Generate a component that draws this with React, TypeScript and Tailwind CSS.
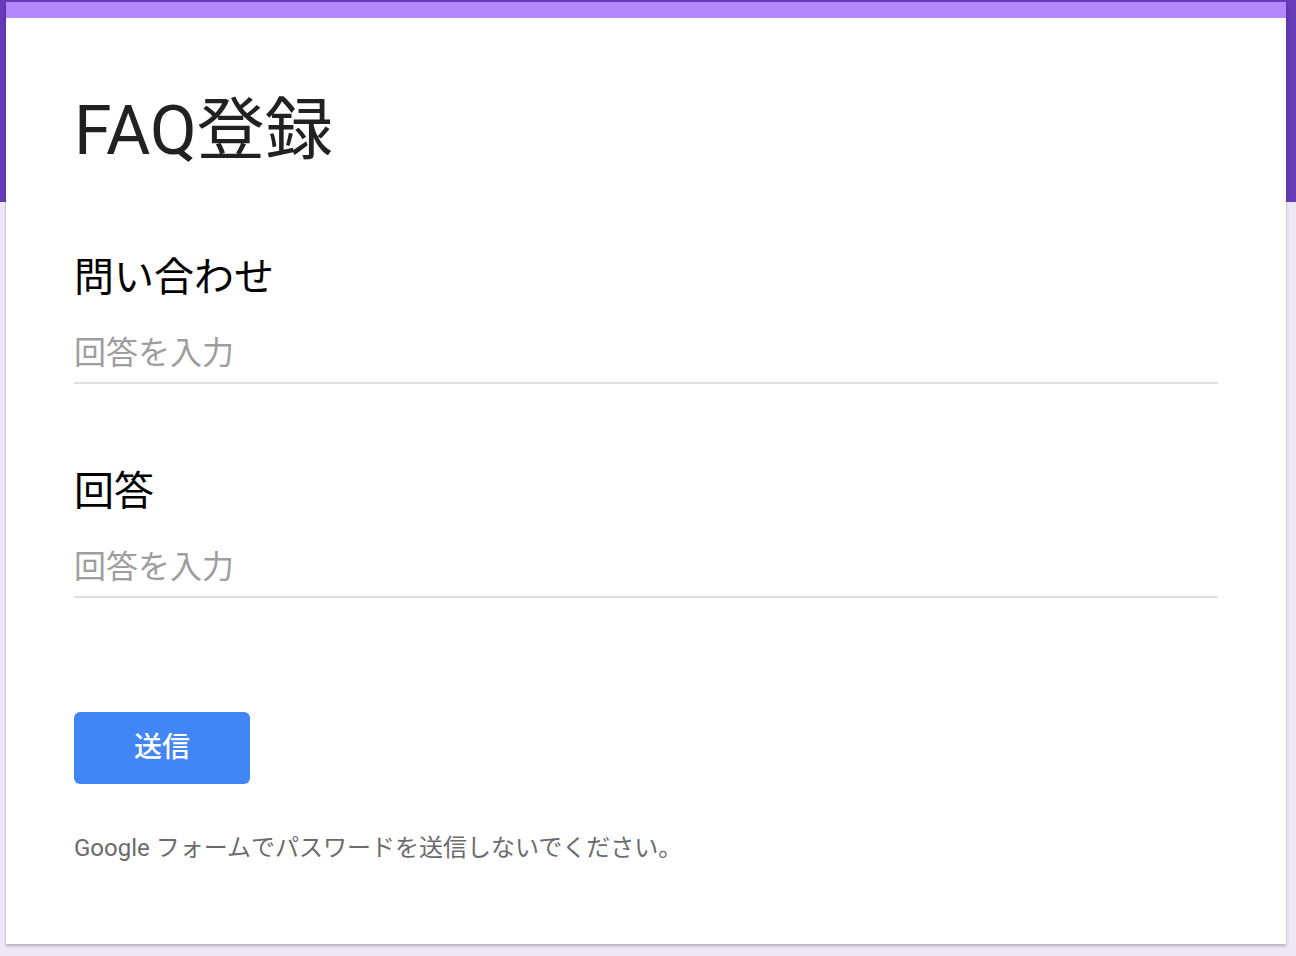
import { FC } from "react";

const font = { fontFamily: '"Roboto", "Noto Sans CJK JP", sans-serif' };

type QuestionProps = {
  label: string;
  className?: string;
};

const Question: FC<QuestionProps> = ({ label, className }) => {
  return (
    <div className={className}>
      <h2 className="text-[40px] leading-[48px] text-black">{label}</h2>
      <div className="mt-[31px] border-b-2 border-[#e0e0e0] pb-[9px]">
        <input
          type="text"
          placeholder="回答を入力"
          className="w-full bg-transparent text-[32px] leading-[40px] text-[#212121] outline-none placeholder:text-[#9e9e9e]"
        />
      </div>
    </div>
  );
};

const App: FC = () => {
  return (
    <main
      style={font}
      className="min-h-screen w-full bg-[linear-gradient(#673ab7_0_202px,#ede7f6_202px)] pt-[2px]"
    >
      <form
        noValidate
        onSubmit={(e) => e.preventDefault()}
        className="ml-[6px] w-[1280px] border-t-[16px] border-[#b388ff] bg-white shadow-[0_2px_3px_rgba(0,0,0,0.25)]"
      >
        <div className="flex flex-col px-[68px] pb-[80px] pt-[73px]">
          <h1 className="text-[68px] leading-[80px] text-[#212121]">FAQ登録</h1>

          <Question label="問い合わせ" className="mt-[83px]" />
          <Question label="回答" className="mt-[84px]" />

          <button
            type="submit"
            className="mt-[114px] flex h-[72px] w-[176px] items-center justify-center rounded-[6px] bg-[#4285f4] text-[28px] font-medium text-white"
          >
            送信
          </button>

          <p className="mt-[48px] text-[24px] leading-[32px] text-[#6b6b6b]">
            Google フォームでパスワードを送信しないでください。
          </p>
        </div>
      </form>
    </main>
  );
};

export default App;
